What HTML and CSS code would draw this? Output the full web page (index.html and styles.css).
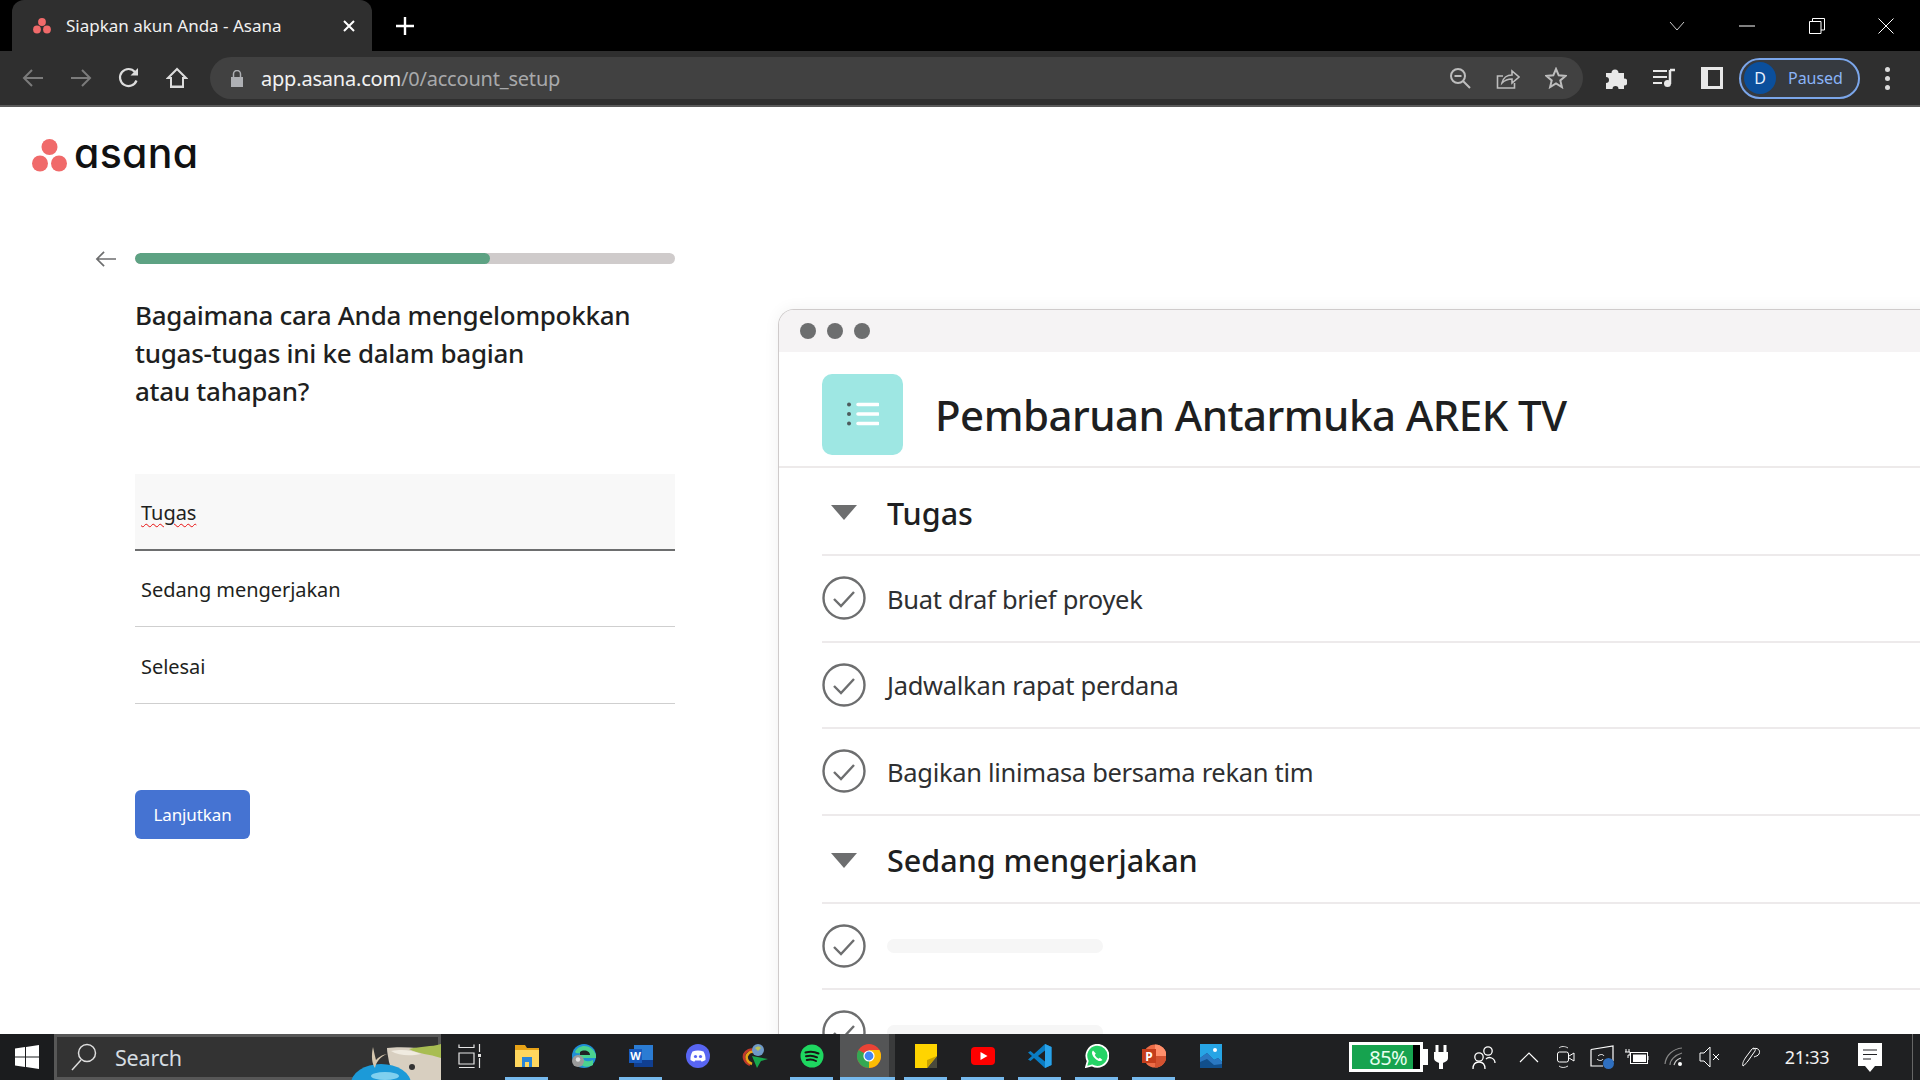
FILE: index.html
```html
<!DOCTYPE html>
<html lang="id">
<head>
<meta charset="utf-8">
<title>Siapkan akun Anda - Asana</title>
<link rel="stylesheet" href="styles.css">
</head>
<body>
<div class="tabstrip">
  <div class="tab">
    <svg class="favicon" viewBox="0 0 18 16"><circle cx="9" cy="4" r="3.9" fill="#f06a6a"/><circle cx="4" cy="11.5" r="3.9" fill="#f06a6a"/><circle cx="14" cy="11.5" r="3.9" fill="#f06a6a"/></svg>
    <span class="tab-title">Siapkan akun Anda - Asana</span>
    <svg class="tab-close" viewBox="0 0 14 14"><path d="M2 2l10 10M12 2L2 12" stroke="#fff" stroke-width="2"/></svg>
  </div>
  <svg class="new-tab" viewBox="0 0 18 18"><path d="M9 0v18M0 9h18" stroke="#fff" stroke-width="2.4"/></svg>
  <div class="win-controls">
    <div class="win-btn"><svg width="16" height="10" viewBox="0 0 16 10"><path d="M1 1l7 8 7-8" fill="none" stroke="#ccc"/></svg></div>
    <div class="win-btn"><svg width="16" height="2" viewBox="0 0 16 2"><path d="M0 1h16" stroke="#fff"/></svg></div>
    <div class="win-btn"><svg width="16" height="16" viewBox="0 0 16 16"><path d="M.5 3.5h11.5v12H.5zM3.5 3.5V.5h12v11.5H12" fill="none" stroke="#fff"/></svg></div>
    <div class="win-btn"><svg width="16" height="16" viewBox="0 0 16 16"><path d="M.5.5l15 15M15.500.5l-15 15" stroke="#fff"/></svg></div>
  </div>
</div>

<div class="toolbar">
  <div class="tb-btn"><svg width="22" height="20" viewBox="0 0 22 20"><path d="M21 10H2M10 2l-8 8 8 8" fill="none" stroke="#7b7b7b" stroke-width="2"/></svg></div>
  <div class="tb-btn"><svg width="22" height="20" viewBox="0 0 22 20"><path d="M1 10h19M12 2l8 8-8 8" fill="none" stroke="#7b7b7b" stroke-width="2"/></svg></div>
  <div class="tb-btn"><svg width="22" height="22" viewBox="0 0 22 22"><path d="M18.500 13.500A8.500 8.500 0 1 1 17 5" fill="none" stroke="#dcdcdc" stroke-width="2.200"/><path d="M20 1v7.500h-7.500z" fill="#dcdcdc"/></svg></div>
  <div class="tb-btn"><svg width="22" height="22" viewBox="0 0 22 22"><path d="M11 2L2 11h3v9h12v-9h3zM5 19.500h12" fill="none" stroke="#dcdcdc" stroke-width="2"/></svg></div>
  <div class="omnibox">
    <svg class="lock" viewBox="0 0 12 17"><path d="M0 7h12v10H0z" fill="#aeb0b4"/><path d="M2.500 7V4a3.500 3.500 0 0 1 7 0v3" fill="none" stroke="#aeb0b4" stroke-width="1.500"/></svg>
    <span class="url"><span class="url-host">app.asana.com</span>/0/account_setup</span>
    <div class="tb-btn"><svg width="22" height="22" viewBox="0 0 22 22"><circle cx="9" cy="9" r="7" fill="none" stroke="#bdbdbd" stroke-width="2"/><path d="M5.500 9h7M14 14l7 7" stroke="#bdbdbd" stroke-width="2"/></svg></div>
    <div class="tb-btn"><svg width="24" height="22" viewBox="0 0 24 22"><path d="M7 9H1.500v12h17v-5" fill="none" stroke="#bdbdbd" stroke-width="1.600"/><path d="M6 16c1-5 5-8 10-8V4l7 6-7 6v-4c-4 0-7 1-10 4z" fill="none" stroke="#bdbdbd" stroke-width="1.600"/></svg></div>
    <div class="tb-btn"><svg width="22" height="22" viewBox="0 0 22 22"><path d="M11 2l2.700 6.300 6.800.6-5.200 4.500 1.600 6.700-5.900-3.600-5.900 3.600 1.600-6.700L1.500 8.900l6.800-.6z" fill="none" stroke="#bdbdbd" stroke-width="2"/></svg></div>
  </div>
  <div class="tb-btn"><svg width="22" height="22" viewBox="0 0 22 22"><path d="M1 6h5.500a3.500 3.500 0 1 1 7 0H19v5.500a3.500 3.500 0 1 1 0 7V22h-5.500a3 3 0 0 0-6 0H1v-6a3 3 0 0 0 0-6z" fill="#e8e8e8"/></svg></div>
  <div class="tb-btn"><svg width="24" height="20" viewBox="0 0 24 20"><path d="M1 3h14M1 9h14M1 15h9" stroke="#e8e8e8" stroke-width="2"/><path d="M18 2v14" stroke="#e8e8e8" stroke-width="2.500"/><path d="M18 2h5" stroke="#e8e8e8" stroke-width="2.500"/><circle cx="15.500" cy="15.500" r="3.500" fill="#e8e8e8"/></svg></div>
  <div class="tb-btn"><svg width="22" height="22" viewBox="0 0 22 22"><path d="M0 0h22v22H0z" fill="#e8e8e8"/><path d="M7 3h12v16H7z" fill="#2f2f2f"/></svg></div>
  <div class="profile">
    <span class="avatar">D</span>
    <span class="paused">Paused</span>
  </div>
  <div class="menu-btn"><i></i><i></i><i></i></div>
</div>

<main class="page">
  <div class="logo">
    <svg class="logo-mark" viewBox="0 0 35 33"><circle cx="17.500" cy="8" r="8" fill="#f06a6a"/><circle cx="8" cy="24.500" r="8" fill="#f06a6a"/><circle cx="27" cy="24.500" r="8" fill="#f06a6a"/></svg>
    <span class="logo-word">asana</span>
  </div>
  <div class="content">
    <section class="setup">
      <div class="progress-row">
        <svg class="back" viewBox="0 0 22 18"><path d="M22 9H2M9.500 1.500L2 9l7.500 7.500" fill="none" stroke="#6d6e6f" stroke-width="1.800"/></svg>
        <div class="progress"><div class="progress-fill" style="width:65.700%"></div></div>
      </div>
      <div class="form">
        <h1 class="question">Bagaimana cara Anda mengelompokkan<br>tugas-tugas ini ke dalam bagian<br>atau tahapan?</h1>
        <div class="field field-active"><span class="misspelled">Tugas</span></div>
        <div class="field">Sedang mengerjakan</div>
        <div class="field">Selesai</div>
        <button class="continue">Lanjutkan</button>
      </div>
    </section>

    <section class="card">
      <div class="card-bar"><i></i><i></i><i></i></div>
      <div class="project-head">
        <div class="project-icon">
          <svg width="32" height="24" viewBox="0 0 32 24"><circle cx="2" cy="2.500" r="2" fill="#4d5a5c"/><circle cx="2" cy="12" r="2" fill="#4d5a5c"/><circle cx="2" cy="21.500" r="2" fill="#4d5a5c"/><path d="M11 2.500h20M11 12h20M11 21.500h20" stroke="#fff" stroke-width="3.600" stroke-linecap="round"/></svg>
        </div>
        <div class="project-title">Pembaruan Antarmuka AREK TV</div>
      </div>
      <div class="list">
        <div class="section-row"><svg class="caret" viewBox="0 0 26 15"><path d="M0 0h26L13 15z" fill="#6d6e6f"/></svg><span>Tugas</span></div>
        <div class="task-row"><svg class="check" viewBox="0 0 44 44"><circle cx="22" cy="22" r="20.500" fill="none" stroke="#6d6e6f" stroke-width="2.400"/><path d="M12 23l7 7 13-14" fill="none" stroke="#6d6e6f" stroke-width="2.400"/></svg><span>Buat draf brief proyek</span></div>
        <div class="task-row"><svg class="check" viewBox="0 0 44 44"><circle cx="22" cy="22" r="20.500" fill="none" stroke="#6d6e6f" stroke-width="2.400"/><path d="M12 23l7 7 13-14" fill="none" stroke="#6d6e6f" stroke-width="2.400"/></svg><span>Jadwalkan rapat perdana</span></div>
        <div class="task-row"><svg class="check" viewBox="0 0 44 44"><circle cx="22" cy="22" r="20.500" fill="none" stroke="#6d6e6f" stroke-width="2.400"/><path d="M12 23l7 7 13-14" fill="none" stroke="#6d6e6f" stroke-width="2.400"/></svg><span>Bagikan linimasa bersama rekan tim</span></div>
        <div class="section-row"><svg class="caret" viewBox="0 0 26 15"><path d="M0 0h26L13 15z" fill="#6d6e6f"/></svg><span>Sedang mengerjakan</span></div>
        <div class="task-row"><svg class="check" viewBox="0 0 44 44"><circle cx="22" cy="22" r="20.500" fill="none" stroke="#6d6e6f" stroke-width="2.400"/><path d="M12 23l7 7 13-14" fill="none" stroke="#6d6e6f" stroke-width="2.400"/></svg><div class="skeleton"></div></div>
        <div class="task-row"><svg class="check" viewBox="0 0 44 44"><circle cx="22" cy="22" r="20.500" fill="none" stroke="#6d6e6f" stroke-width="2.400"/><path d="M12 23l7 7 13-14" fill="none" stroke="#6d6e6f" stroke-width="2.400"/></svg><div class="skeleton"></div></div>
      </div>
    </section>
  </div>
</main>

<footer class="taskbar">
  <div class="start"><svg width="24" height="24" viewBox="0 0 24 24"><path d="M0 3.500l10-1.400v9.400H0zM11 2l13-2v11.500H11zM0 12.500h10v9.400l-10-1.400zM11 12.500h13V24l-13-2z" fill="#fff"/></svg></div>
  <div class="searchbox">
    <svg class="search-glass" viewBox="0 0 26 28"><circle cx="16" cy="10" r="8.500" fill="none" stroke="#ddd" stroke-width="1.500"/><path d="M10 17L1 27" stroke="#ddd" stroke-width="1.500"/></svg>
    <span class="search-text">Search</span>
    <svg class="mascot" viewBox="0 0 90 46"><path d="M36 14C50 12 70 14 90 16V46H58C46 44 40 36 38 28 37 22 36 18 36 14z" fill="#d8cfc0"/><path d="M58 15C70 12 80 13 90 10V24C78 20 68 20 58 15z" fill="#a8bd52"/><path d="M40 17C52 15 60 16 70 20 60 22 48 22 40 17z" fill="#f0ebe0"/><ellipse cx="30" cy="50" rx="30" ry="20" fill="#1c9ad8"/><ellipse cx="34" cy="42" rx="14" ry="4" fill="#7fd0ef"/><circle cx="61" cy="33" r="3" fill="#333"/><path d="M22 13C20 22 21 30 24 34 25 28 30 22 36 20 30 21 27 24 25 26 24 22 23 18 22 13z" fill="#d6c7ae"/></svg>
  </div>
  <div class="apps">
    <div class="app"><svg width="24" height="24" viewBox="0 0 24 24"><path d="M1 .5v3h15v-3M1 9h15v11H1zM1 23.500h15v-.5M21.500 0v8M21.500 14v10" fill="none" stroke="#e6e6e6" stroke-width="1.200"/><rect x="20" y="10" width="3" height="3" fill="#e6e6e6"/></svg></div>
    <div class="app on"><svg width="24" height="22" viewBox="0 0 24 22"><path d="M0 0h10l2 3h12v3H0z" fill="#e8a317"/><path d="M0 5h24v17H0z" fill="#ffd75e"/><path d="M7 12h10v10h-3v-5h-4v5H7z" fill="#2a86d8"/></svg></div>
    <div class="app"><svg width="24" height="24" viewBox="0 0 24 24"><circle cx="12" cy="12" r="12" fill="#1f8fd6"/><path d="M3 8c3-8 17-9 21 3v3H11c1 4 6 4 10 2v5c-5 3-12 2-14-3-2-4 0-8 3-9-3 0-6 1-7-1z" fill="#4bd28f"/><path d="M8 8c4-3 10-1 10 3H8z" fill="#202124"/><circle cx="6" cy="17" r="6" fill="#9a9a9a"/><circle cx="6" cy="15.500" r="2.200" fill="#e2e2e2"/></svg></div>
    <div class="app on"><svg width="24" height="22" viewBox="0 0 24 22"><path d="M5 0h19v22H5z" fill="#2b7cd3"/><path d="M5 15h19v7H5z" fill="#103f91"/><path d="M0 4h13v14H0z" fill="#185abd"/><text class="word-w" x="6.500" y="15" text-anchor="middle">W</text></svg></div>
    <div class="app"><svg width="24" height="24" viewBox="0 0 24 24"><circle cx="12" cy="12" r="12" fill="#5865f2"/><path d="M6.500 7.500c3.500-1.500 7.500-1.500 11 0 1.500 2.500 2.200 5.500 2 8.500-1.200.9-2.500 1.500-3.800 1.800l-.9-1.400H9.200l-.9 1.400c-1.300-.3-2.600-.9-3.800-1.800-.2-3 .5-6 2-8.500z" fill="#fff"/><circle cx="9.500" cy="12.500" r="1.600" fill="#5865f2"/><circle cx="14.500" cy="12.500" r="1.600" fill="#5865f2"/></svg></div>
    <div class="app"><svg width="26" height="24" viewBox="0 0 26 24"><path d="M8 21C2 18 0 12 4 8c2-2 5-3 8-2" fill="none" stroke="#c0392b" stroke-width="2.500"/><path d="M10 20C5 18 3 13 6 10c1-1.500 3-2.500 5-2" fill="none" stroke="#e8a317" stroke-width="2.500"/><circle cx="16" cy="6" r="6" fill="#6f9ac7"/><path d="M13 4c2-2 5-2 6 0l-3 3z" fill="#b9c15a"/><path d="M10 12l16 3-7 2-4 7z" fill="#17a84c"/></svg></div>
    <div class="app on"><svg width="24" height="24" viewBox="0 0 24 24"><circle cx="12" cy="12" r="11.500" fill="#1ed760"/><path d="M5.500 8.500c4-1.200 9-1 13 1M6 12.300c3.500-1 7.500-.7 11 1M6.800 16c3-.8 6.500-.5 9.200 1" fill="none" stroke="#191414" stroke-width="2" stroke-linecap="round"/></svg></div>
    <div class="app on active"><svg width="24" height="24" viewBox="0 0 24 24"><circle cx="12" cy="12" r="12" fill="#ea4335"/><path d="M12 24A12 12 0 0 1 1.600 6L12 12z" fill="#34a853"/><path d="M12 24A12 12 0 0 0 22.400 6H12z" fill="#fbbc05"/><circle cx="12" cy="12" r="5.600" fill="#fff"/><circle cx="12" cy="12" r="4.400" fill="#4285f4"/></svg></div>
    <div class="app on"><svg width="22" height="24" viewBox="0 0 22 24"><path d="M0 0h22v24H0z" fill="#ffd400"/><path d="M22 12v12H12z" fill="#4a4a3c"/><path d="M22 12L12 24V16z" fill="#c9a300"/></svg></div>
    <div class="app on"><svg width="24" height="18" viewBox="0 0 24 18"><rect width="24" height="18" rx="4" fill="#f00"/><path d="M9.500 5l7 4-7 4z" fill="#fff"/></svg></div>
    <div class="app on"><svg width="24" height="24" viewBox="0 0 24 24"><path d="M17 0l6.500 3v18L17 24 6 14l-3.500 3L0 15.500 4 12 0 8.500 2.500 7 6 10z" fill="#0a7dc4"/><path d="M17 0l6.500 3v18L17 24z" fill="#2aa3ea"/><path d="M17 6.500L10 12l7 5.500z" fill="#202124"/></svg></div>
    <div class="app on"><svg width="24" height="24" viewBox="0 0 24 24"><path d="M1 23l1.700-6A11 11 0 1 1 7 21.400z" fill="#25d366" stroke="#fff" stroke-width="1.800"/><path d="M8 6.500c-2 2-.8 5 1.800 7.700 2.700 2.700 5.600 3.800 7.700 1.800l-2.600-2.300-1.400 1c-1.500-.7-3-2.200-3.700-3.700l1-1.400z" fill="#fff"/></svg></div>
    <div class="app on"><svg width="24" height="24" viewBox="0 0 24 24"><circle cx="13" cy="12" r="11.500" fill="#ed6c47"/><path d="M13 .5A11.500 11.500 0 0 1 24.500 12H13z" fill="#ff8f6b"/><path d="M13 12h11.500A11.500 11.500 0 0 1 13 23.500z" fill="#d35230"/><rect x="0" y="5" width="14" height="14" fill="#c43e1c"/><text class="ppt-p" x="7" y="16.500" text-anchor="middle">P</text></svg></div>
    <div class="app"><svg width="22" height="24" viewBox="0 0 22 24"><path d="M0 0h22v24H0z" fill="#27a5e5"/><path d="M0 24V14l7-5 7 7 4-2 4 4v6z" fill="#114f8c"/><path d="M7 9l7 7 4-2 4 4v2L14 21 7 15 0 18v-4z" fill="#2a78c2"/><circle cx="15" cy="6" r="2" fill="#fff"/></svg></div>
  </div>
  <div class="tray">
    <div class="battery">
      <div class="battery-box"><span class="battery-level">85%</span><span class="battery-empty"></span></div>
      <span class="battery-nub"></span>
    </div>
    <div class="tray-i w-plug"><svg width="14" height="24" viewBox="0 0 14 24"><path d="M3 0v7M11 0v7" stroke="#fff" stroke-width="3"/><path d="M0 7h14v6c0 3-3 4-5 5v6H5v-6c-2-1-5-2-5-5z" fill="#fff"/></svg></div>
    <div class="tray-i w-people"><svg width="24" height="24" viewBox="0 0 24 24"><circle cx="16" cy="6" r="4.200" fill="none" stroke="#fff" stroke-width="1.300"/><circle cx="7" cy="12" r="4.200" fill="none" stroke="#fff" stroke-width="1.300"/><path d="M1 24c0-4 2-7 6-7s6 3 6 7M14 14c3-3 9-1 9 4" fill="none" stroke="#fff" stroke-width="1.300"/></svg></div>
    <div class="tray-i w-chev"><svg width="20" height="11" viewBox="0 0 20 11"><path d="M1 10l9-9 9 9" fill="none" stroke="#fff" stroke-width="1.200"/></svg></div>
    <div class="tray-i w-meet"><svg width="18" height="24" viewBox="0 0 18 24"><path d="M2 3C4 1 8 1 11 3M2 21c2 2 6 2 9 0" fill="none" stroke="#ddd"/><rect x=".5" y="7" width="11" height="10" rx="2" fill="none" stroke="#fff"/><path d="M12 11l5-3v8l-5-3" fill="none" stroke="#fff"/></svg></div>
    <div class="tray-i w-sync"><svg width="24" height="24" viewBox="0 0 24 24"><path d="M1 4.500L23 1v15M1 4.500V21h12" fill="none" stroke="#fff" stroke-width="1.200"/><path d="M8 11c2-2 5-2 6 0M13 14c-1 2-4 2-6 0" fill="none" stroke="#fff"/><circle cx="18.500" cy="18.500" r="5.500" fill="#2f6fbf"/></svg></div>
    <div class="tray-i w-batt"><svg width="24" height="16" viewBox="0 0 24 16"><rect x="5.500" y="3.500" width="17" height="11" fill="none" stroke="#fff"/><rect x="8" y="5.500" width="13" height="7.500" fill="#fff"/><path d="M1 0v3M4 0v3M0 3h5v3H3v3" fill="none" stroke="#fff"/><path d="M23 7v4" stroke="#fff"/></svg></div>
    <div class="tray-i w-wifi"><svg width="20" height="20" viewBox="0 0 20 20"><path d="M1 17C2 8 9 2 18 1M6 18c0-5 5-10 12-12" fill="none" stroke="#888" stroke-width="1.200"/><path d="M10 18c1-4 4-6 7-7" fill="none" stroke="#ccc" stroke-width="1.200"/><circle cx="16" cy="17" r="2" fill="#fff"/></svg></div>
    <div class="tray-i w-sound"><svg width="22" height="22" viewBox="0 0 22 22"><path d="M1 7h4l6-6v20l-6-6H1z" fill="none" stroke="#fff"/><path d="M14 8l6 6M20 8l-6 6" stroke="#fff"/></svg></div>
    <div class="tray-i w-pen"><svg width="20" height="22" viewBox="0 0 20 22"><path d="M1 20c-1-3 1-6 3-9l6-8c2-2 4 0 3 2l-7 10c-2 2-3 4-5 5z" fill="none" stroke="#fff"/><path d="M11 3c4-2 8 1 6 5-1 2-3 2-5 3" fill="none" stroke="#fff"/></svg></div>
    <div class="clock">21:33</div>
    <div class="tray-i w-notif"><svg width="24" height="29" viewBox="0 0 24 29"><path d="M0 0h24v23h-7l-5 6-5-6H0z" fill="#fff"/><path d="M5 7h14M5 11.500h14M5 16h8" stroke="#202124" stroke-width="1.200"/></svg></div>
    <div class="show-desktop"></div>
  </div>
</footer>
</body>
</html>
```

FILE: styles.css
```css
* { box-sizing: border-box; }
html, body { margin: 0; height: 100%; }
body {
  width: 1920px;
  height: 1080px;
  display: flex;
  flex-direction: column;
  overflow: hidden;
  font-family: "Noto Sans", "Open Sans", sans-serif;
  background: #fff;
  color: #1e1f21;
}

/* browser chrome */
.tabstrip { flex: none; height: 51px; background: #000; display: flex; align-items: center; }
.tab {
  width: 360px; height: 51px; margin-left: 12px; padding: 0 16px 0 21px;
  background: #2f2f2f; border-radius: 12px 12px 0 0;
  display: flex; align-items: center; color: #fff;
}
.favicon { width: 18px; height: 16px; flex: none; }
.tab-title { margin-left: 15px; flex: 1; font-size: 17px; white-space: nowrap; color: #f1f1f1; }
.tab-close { width: 14px; height: 14px; }
.new-tab { width: 18px; height: 18px; margin-left: 24px; }
.win-controls { margin-left: auto; display: flex; }
.win-btn { width: 70px; height: 42px; display: flex; align-items: center; justify-content: center; }
.win-btn:last-child { width: 68px; }

.toolbar { flex: none; height: 56px; padding: 0 15px 0 9px; background: #2f2f2f; border-bottom: 2px solid #5a5a5a; display: flex; align-items: center; }
.tb-btn { width: 48px; height: 42px; flex: none; display: flex; align-items: center; justify-content: center; }
.omnibox { flex: 1; height: 42px; margin: 0 9px; padding: 0 3px 0 21px; background: #414141; border-radius: 21px; display: flex; align-items: center; }
.lock { width: 12px; height: 17px; flex: none; }
.url { flex: 1; margin-left: 18px; font-size: 20px; letter-spacing: -.2px; color: #a8a9ab; white-space: nowrap; }
.url-host { color: #f1f1f1; }
.profile { width: 121px; height: 41px; margin-left: 3px; padding-left: 3px; border: 2px solid #7ba6ea; border-radius: 21px; background: #363a40; display: flex; align-items: center; flex: none; }
.avatar { width: 32px; height: 32px; border-radius: 50%; background: #0b4f9c; color: #e8f0fe; font-size: 16px; display: flex; align-items: center; justify-content: center; }
.paused { margin-left: 12px; font-size: 16px; letter-spacing: -.05px; color: #8ab4f8; }
.menu-btn { width: 36px; margin-left: 9px; display: flex; flex-direction: column; align-items: center; gap: 4px; }
.menu-btn i { width: 5px; height: 5px; border-radius: 50%; background: #dcdcdc; }

/* page */
.page { flex: 1; min-height: 0; overflow: hidden; background: #fff; }
.logo { padding: 32px 0 0 32px; display: flex; align-items: flex-start; margin-bottom: 81px; box-sizing: content-box; height: 33px; }
.logo-mark { width: 35px; height: 33px; flex: none; }
.logo-word { margin: -14px 0 0 7px; font-family: Inter, "Noto Sans", sans-serif; font-feature-settings: "cv11"; font-size: 41px; line-height: 56px; font-weight: 500; letter-spacing: .3px; color: #111; }
.content { display: flex; align-items: flex-start; }
.setup { width: 580px; margin-left: 95px; flex: none; }
.progress-row { display: flex; align-items: center; gap: 19px; height: 11px; }
.back { width: 21px; height: 18px; flex: none; }
.progress { width: 540px; height: 11px; border-radius: 6px; background: #cfcbcb; overflow: hidden; }
.progress-fill { height: 100%; background: #5da283; border-radius: 6px; }
.form { margin-left: 40px; padding-top: 32px; width: 540px; }
.question { margin: 0 0 64px; font-size: 26px; line-height: 38px; font-weight: 500; letter-spacing: -.28px; color: #1e1f21; white-space: nowrap; }
.field { height: 76.700px; padding: 2px 0 0 6px; border-bottom: 1px solid #cfcfcf; display: flex; align-items: center; font-size: 20px; letter-spacing: -.05px; color: #1e1f21; }
.field-active { background: #f8f8f8; border-bottom-color: #6d6e6f; border-bottom-width: 2px; }
.misspelled { text-decoration: underline wavy #e81010 1px; text-underline-offset: 3px; }
.continue { display: block; width: 115px; height: 49px; margin-top: 86px; padding: 0; border: 0; border-radius: 6px; background: #4573d2; color: #fff; font: 17px "Noto Sans", sans-serif; letter-spacing: -.1px; }

/* project preview */
.card { flex: none; width: 1300px; margin: 56px 0 0 103px; background: #fff; border: 1px solid #cfcbcb; border-right: 0; border-bottom: 0; border-radius: 16px 0 0 0; box-shadow: 0 0 16px rgba(0,0,0,.06); overflow: hidden; }
.card-bar { height: 42px; padding-left: 21px; background: #f5f3f4; display: flex; align-items: center; gap: 11px; }
.card-bar i { width: 16px; height: 16px; border-radius: 50%; background: #6d6e6f; }
.project-head { height: 116px; padding: 10px 0 0 43px; border-bottom: 2px solid #edeaea; display: flex; align-items: center; gap: 32px; }
.project-icon { width: 81px; height: 81px; border-radius: 10px; background: #9ee7e3; display: flex; align-items: center; justify-content: center; }
.project-title { font-size: 42px; font-weight: 500; letter-spacing: -.52px; color: #1e1f21; white-space: nowrap; margin-top: 1px; }
.list { margin-left: 43px; }
.section-row { height: 88px; border-bottom: 2px solid #edeaeb; display: flex; align-items: center; gap: 30px; padding: 3px 0 0 9px; font-size: 30.500px; font-weight: 500; color: #1e1f21; }
.caret { width: 26px; height: 15px; flex: none; margin-bottom: 0; }
.task-row { height: 86.500px; border-bottom: 2px solid #edeaeb; display: flex; align-items: center; gap: 21px; font-size: 25.500px; letter-spacing: -.3px; color: #2e2f31; white-space: nowrap; }
.task-row span { margin-top: 1px; }
.check { width: 44px; height: 44px; flex: none; }
.skeleton { width: 216px; height: 14px; border-radius: 7px; background: #f6f6f6; }

/* taskbar */
.taskbar { flex: none; height: 46px; background: #1f2022; display: flex; align-items: stretch; position: relative; color: #fff; }
.start { width: 54px; display: flex; align-items: center; justify-content: center; background: #1b1c1e; }
.searchbox { width: 387px; border: 3px solid #575757; background: #333; display: flex; align-items: center; padding-left: 14px; position: relative; }
.search-glass { width: 26px; height: 28px; flex: none; }
.search-text { margin-left: 18px; font-size: 21.500px; letter-spacing: -.2px; color: #d5dde2; }
.mascot { position: absolute; right: -3px; bottom: -3px; width: 90px; height: 46px; }
.apps { display: flex; }
.app { width: 57px; display: flex; align-items: center; justify-content: center; position: relative; padding-bottom: 2px; }
.app.on::after { content: ""; position: absolute; left: 7px; right: 7px; bottom: 0; height: 3px; background: #76b9ed; }
.app.active { background: linear-gradient(90deg, #545556 49px, #3a3b3c 49px, #3a3b3c 55px, transparent 55px); }
.app.active::after { left: 0; right: 2px; }
.word-w { font: 700 11px "Noto Sans", sans-serif; fill: #fff; }
.ppt-p { font: 700 12px "Noto Sans", sans-serif; fill: #fff; }
.tray { margin-left: auto; display: flex; align-items: center; }
.battery { display: flex; align-items: center; margin-right: 1px; }
.battery-box { width: 74px; height: 30px; border: 3px solid #fff; background: #16a34f; display: flex; align-items: center; justify-content: flex-end; }
.battery-level { font-size: 20px; letter-spacing: -.6px; color: #e8fff0; margin-right: 6px; }
.battery-empty { width: 7px; height: 100%; background: #000; }
.battery-nub { width: 5px; height: 16px; background: #fff; }
.tray-i { display: flex; align-items: center; justify-content: center; }
.w-plug { width: 24px; }
.w-people { width: 62px; }
.w-chev { width: 28px; }
.w-meet { width: 46px; }
.w-sync { width: 26px; }
.w-batt { width: 44px; }
.w-wifi { width: 36px; margin: 0 3px 0 -3px; }
.w-sound { width: 30px; }
.w-pen { width: 54px; }
.clock { width: 56px; text-align: center; font-size: 18px; letter-spacing: -.3px; color: #f1f1f1; }
.w-notif { width: 70px; }
.show-desktop { width: 1px; height: 46px; background: #666; margin: 0 7px; }
```
